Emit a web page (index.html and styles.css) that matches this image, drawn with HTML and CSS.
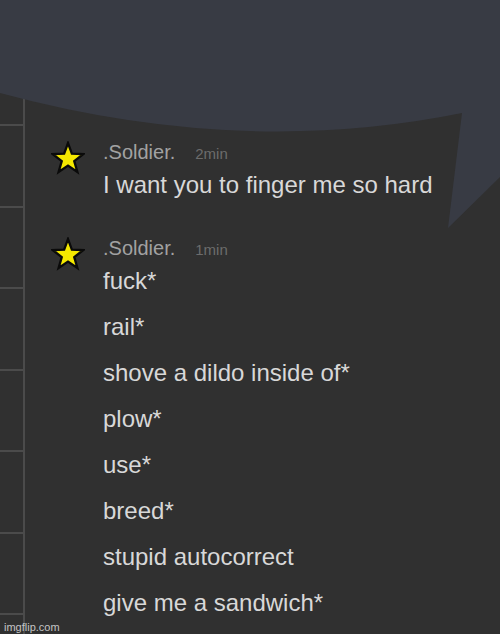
FILE: index.html
```html
<!DOCTYPE html>
<html lang="en">
<head>
<meta charset="utf-8">
<title>Chat</title>
<link rel="stylesheet" href="styles.css">
</head>
<body>
<svg class="bubble" width="500" height="240" viewBox="0 0 500 240" aria-hidden="true">
  <path d="M0 0 H500 V177 L448 228 L462 113 Q240 158 0 93 Z" fill="#383b44"/>
</svg>
<div class="app">
  <aside class="sidebar">
    <div class="cell first"></div>
    <div class="cell"></div>
    <div class="cell"></div>
    <div class="cell"></div>
    <div class="cell"></div>
    <div class="cell"></div>
    <div class="cell"></div>
    <div class="cell last"></div>
  </aside>
  <main class="chat">
    <section class="msg">
      <svg class="star" width="34" height="34" viewBox="0 0 32 32"><polygon points="16,2 19.64,11.98 30.27,12.36 21.9,18.92 24.82,29.14 16,23.2 7.18,29.14 10.1,18.92 1.73,12.36 12.36,11.98" fill="#f4e800" stroke="#0a0a0a" stroke-width="2.2" stroke-linejoin="miter"/></svg>
      <div class="meta"><span class="name">.Soldier.</span><span class="time">2min</span></div>
      <div class="lines">
        <div class="line">I want you to finger me so hard</div>
      </div>
    </section>
    <section class="msg">
      <svg class="star" width="34" height="34" viewBox="0 0 32 32"><polygon points="16,2 19.64,11.98 30.27,12.36 21.9,18.92 24.82,29.14 16,23.2 7.18,29.14 10.1,18.92 1.73,12.36 12.36,11.98" fill="#f4e800" stroke="#0a0a0a" stroke-width="2.2" stroke-linejoin="miter"/></svg>
      <div class="meta"><span class="name">.Soldier.</span><span class="time">1min</span></div>
      <div class="lines">
        <div class="line">fuck*</div>
        <div class="line">rail*</div>
        <div class="line">shove a dildo inside of*</div>
        <div class="line">plow*</div>
        <div class="line">use*</div>
        <div class="line">breed*</div>
        <div class="line">stupid autocorrect</div>
        <div class="line">give me a sandwich*</div>
      </div>
    </section>
  </main>
</div>
<span class="watermark">imgflip.com</span>
</body>
</html>
```

FILE: styles.css
```css
html, body {
  margin: 0;
  padding: 0;
}
body {
  width: 500px;
  height: 634px;
  overflow: hidden;
  background: #303030;
  font-family: "Liberation Sans", Arial, sans-serif;
  position: relative;
}
.bubble {
  position: absolute;
  top: 0;
  left: 0;
  z-index: 1;
  pointer-events: none;
}
.app {
  display: flex;
  height: 634px;
  overflow: hidden;
}
.sidebar {
  width: 23px;
  flex: none;
  border-right: 2px solid #4b4b4b;
  display: flex;
  flex-direction: column;
}
.cell {
  height: 79.5px;
  flex: none;
  border-bottom: 2px solid #4b4b4b;
}
.cell.first {
  height: 124px;
}
.cell.last {
  flex: 1;
  height: auto;
  border-bottom: none;
}
.chat {
  flex: 1;
  padding: 143px 0 0 26px;
}
.msg {
  display: grid;
  grid-template-columns: 34px auto;
  column-gap: 18px;
  align-items: start;
}
.msg + .msg {
  margin-top: 31px;
}
.star {
  grid-row: 1 / span 2;
  margin-top: -2px;
  display: block;
}
.meta {
  display: flex;
  align-items: baseline;
  gap: 20px;
  line-height: 18px;
  white-space: nowrap;
}
.name {
  font-size: 20px;
  color: #a2a2a2;
}
.time {
  font-size: 15px;
  color: #6c6c6c;
}
.lines {
  grid-column: 2;
  margin-top: -1px;
}
.line {
  font-size: 24px;
  line-height: 46px;
  color: #d8d8d8;
  white-space: nowrap;
}
.watermark {
  position: absolute;
  left: 4px;
  bottom: 0;
  font-size: 11px;
  line-height: 14px;
  color: #c4c4c4;
}
```
